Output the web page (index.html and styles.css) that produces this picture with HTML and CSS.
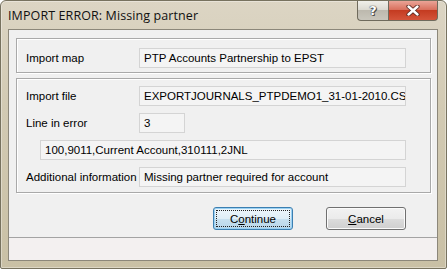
FILE: index.html
```html
<!DOCTYPE html>
<html lang="en">
<head>
<meta charset="UTF-8" />
<title>IMPORT ERROR: Missing partner</title>
<link rel="stylesheet" href="styles.css">
</head>
<body>

<div class="window">
  <div class="titlebar">
    <span class="title">IMPORT ERROR: Missing partner</span>
    <div class="caption-btns">
      <div class="cap help">?</div>
      <div class="cap close">
        <svg width="14" height="11" viewBox="0 0 14 11">
          <path d="M2.5 1.5 L11.5 9.5 M11.5 1.5 L2.5 9.5" stroke="#5a2a22" stroke-width="4.2" stroke-linecap="round"/>
          <path d="M2.5 1.5 L11.5 9.5 M11.5 1.5 L2.5 9.5" stroke="#fff" stroke-width="2.4" stroke-linecap="round"/>
        </svg>
      </div>
    </div>
  </div>

  <div class="client">
    <div class="content">
      <div class="group group-map">
        <div class="row">
          <span class="label">Import map</span>
          <div class="field wide">PTP Accounts Partnership to EPST</div>
        </div>
      </div>

      <div class="group group-detail">
        <div class="row">
          <span class="label">Import file</span>
          <div class="field wide">EXPORTJOURNALS_PTPDEMO1_31-01-2010.CSV</div>
        </div>
        <div class="row">
          <span class="label">Line in error</span>
          <div class="field short">3</div>
        </div>
        <div class="row">
          <div class="field full">100,9011,Current Account,310111,2JNL</div>
        </div>
        <div class="row">
          <span class="label">Additional information</span>
          <div class="field wide">Missing partner required for account</div>
        </div>
      </div>

      <div class="buttons">
        <button class="btn default"><span class="focus">C<u>o</u>ntinue</span></button>
        <button class="btn"><u>C</u>ancel</button>
      </div>
    </div>
    <div class="statusbar"></div>
  </div>
</div>

</body>
</html>
```

FILE: styles.css
```css
body {
  margin: 0;
  font-family: 'Liberation Sans', Arial, sans-serif;
  background: #fff;
}
.window {
  width: 447px;
  height: 269px;
  box-sizing: border-box;
  border: 1px solid #77725f;
  border-radius: 6px 6px 2px 2px;
  background: linear-gradient(#dcd5c4, #d2cab3 40%, #c9c0a5);
  box-shadow: inset 0 0 0 1px rgba(255,255,255,0.35);
  padding: 0 8px 7px 7px;
  display: flex;
  flex-direction: column;
}
.titlebar {
  height: 28px;
  display: flex;
  justify-content: space-between;
  align-items: flex-start;
}
.title {
  font-family: 'Open Sans', 'Noto Sans', sans-serif;
  font-size: 12.5px;
  color: #111;
  margin-top: 6px;
  letter-spacing: 0.1px;
}
.caption-btns {
  display: flex;
}
.cap {
  height: 20px;
  box-sizing: border-box;
  border: 1px solid #6f6a5c;
  border-top: none;
  display: flex;
  align-items: center;
  justify-content: center;
}
.help {
  width: 31px;
  border-right: none;
  border-radius: 0 0 0 4px;
  background: linear-gradient(#f0efea, #dcdad2 45%, #bdb9ae 50%, #c9c6bc);
  color: #fff;
  font-family: 'DejaVu Sans', sans-serif;
  font-weight: bold;
  font-size: 13px;
  text-shadow: 0 0 1px #333, 0 0 1px #333, 1px 1px 0 #555;
}
.close {
  width: 50px;
  border-radius: 0 0 4px 0;
  background: linear-gradient(#eaa497, #d9715e 45%, #c43b21 50%, #d4543a);
}
.client {
  flex: 1;
  border: 1px solid #8c877a;
  background: #f0f0f0;
  display: flex;
  flex-direction: column;
}
.content {
  flex: 1;
  padding: 8px 6px 0 7px;
}
.group {
  border: 1px solid #a9a9a9;
  box-shadow: inset 1px 1px 0 #fff, 1px 1px 0 #fff;
  padding: 9px 24px 4px 9px;
  display: flex;
  flex-direction: column;
  gap: 7px;
}
.group-map {
  margin-bottom: 5px;
}
.group-detail {
  padding-top: 7px;
  padding-bottom: 5px;
}
.row {
  display: flex;
  align-items: center;
  height: 20px;
}
.label {
  width: 113px;
  font-size: 11.5px;
  color: #000;
  white-space: nowrap;
}
.field {
  height: 20px;
  box-sizing: border-box;
  border: 1px solid #d4d4d4;
  background: #f4f4f4;
  font-size: 11.5px;
  line-height: 18px;
  padding-left: 4px;
  white-space: nowrap;
  overflow: hidden;
  color: #000;
}
.wide {
  width: 267px;
}
.short {
  width: 46px;
}
.full {
  width: 366px;
  margin-left: 14px;
}
.buttons {
  display: flex;
  justify-content: flex-end;
  gap: 33px;
  margin-top: 14px;
  padding-right: 25px;
}
.btn {
  width: 80px;
  height: 23px;
  box-sizing: border-box;
  border: 1px solid #707070;
  border-radius: 3px;
  background: linear-gradient(#f2f2f2, #ebebeb 50%, #dddddd 50%, #cfcfcf);
  box-shadow: inset 0 0 0 1px #fbfbfb;
  font-family: 'Liberation Sans', Arial, sans-serif;
  font-size: 11.5px;
  color: #000;
  padding: 0;
}
.btn.default {
  border-color: #3c7fb1;
  background: linear-gradient(#eef6fb, #dfeef7 50%, #c9e1f0 50%, #b8d6ea);
  box-shadow: inset 0 0 0 1px #9bd1f3;
  padding: 2px;
}
.focus {
  display: flex;
  align-items: center;
  justify-content: center;
  height: 100%;
  box-sizing: border-box;
  border: 1px dotted #222;
}
.statusbar {
  height: 22px;
  border-top: 1px solid #a3a3a3;
  background: #f3f0f0;
}
```
